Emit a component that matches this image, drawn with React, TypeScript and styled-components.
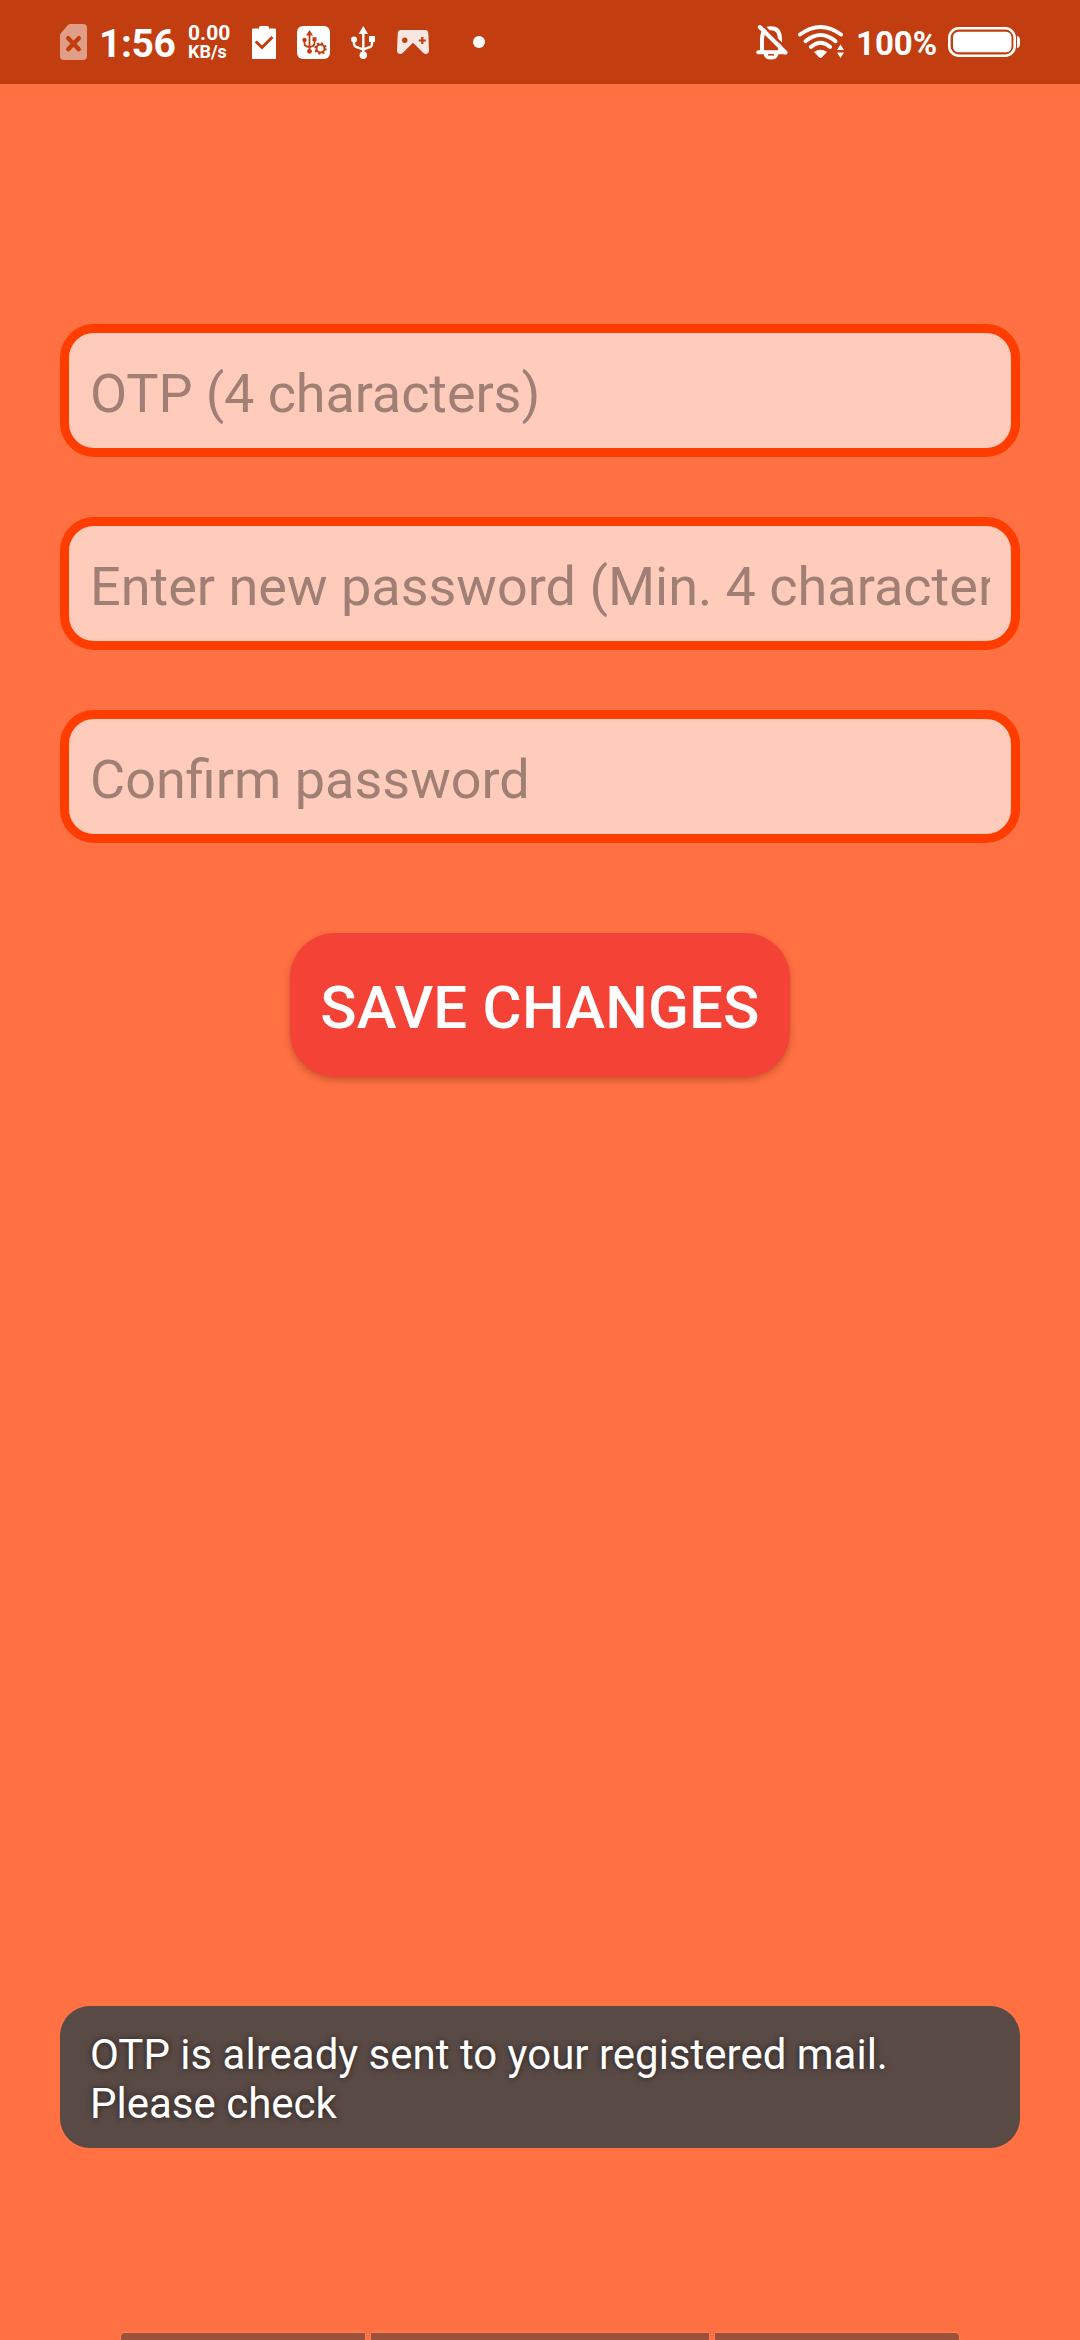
import React from "react";
import styled, { createGlobalStyle } from "styled-components";

const GlobalStyle = createGlobalStyle`
  *, *::before, *::after { box-sizing: border-box; }
  html, body { margin: 0; padding: 0; background: #ff7043; }
  body { font-family: Roboto, "Noto Sans", sans-serif; }
`;

const Screen = styled.div`
  display: flex;
  flex-direction: column;
  width: 1080px;
  height: 2340px;
  overflow: hidden;
  background: #ff7043;
`;

const StatusBar = styled.header`
  display: flex;
  justify-content: space-between;
  flex: none;
  height: 84px;
  padding: 0 60px;
  background: #c23d10;
  color: #fff;
`;

const StatusGroup = styled.div`
  display: flex;
  align-items: center;
  height: 84px;
`;

const Icon = styled.svg<{ $gap?: number }>`
  display: block;
  flex: none;
  margin-left: ${(p) => p.$gap ?? 0}px;
`;

const Clock = styled.span`
  width: 76px;
  margin-left: 12px;
  padding-top: 3px;
  font-size: 39px;
  font-weight: 700;
  line-height: 46px;
  letter-spacing: -0.4px;
  white-space: nowrap;
`;

const NetSpeed = styled.div`
  display: flex;
  flex-direction: column;
  width: 42px;
  margin-left: 13px;
  font-weight: 700;
  white-space: nowrap;
`;

const SpeedValue = styled.span`
  font-size: 21px;
  line-height: 19px;
`;

const SpeedUnit = styled.span`
  font-size: 18px;
  line-height: 17px;
`;

const BatteryText = styled.span`
  width: 81px;
  margin-left: 10px;
  padding-top: 4px;
  font-size: 33px;
  font-weight: 700;
  line-height: 38px;
  white-space: nowrap;
`;

const Form = styled.form`
  display: flex;
  flex-direction: column;
  align-items: center;
  flex: 1;
  padding: 240px 60px 0;
`;

const Field = styled.input<{ $tracking?: string }>`
  display: block;
  width: 100%;
  height: 133px;
  margin: 0 0 60px;
  padding: 6px 21px 0;
  border: 9px solid #ff3d00;
  border-radius: 34px;
  outline: 0;
  background: #ffccbc;
  color: #3b2a25;
  font: 400 54px/64px Roboto, "Noto Sans", sans-serif;
  letter-spacing: ${(p) => p.$tracking ?? "normal"};

  &::placeholder {
    color: #a07f75;
    opacity: 1;
  }
`;

const SaveButton = styled.button`
  width: 500px;
  height: 144px;
  margin-top: 30px;
  padding: 6px 0 0;
  border: 0;
  border-radius: 45px;
  background: #f44336;
  color: #fff;
  font: 500 60px/70px Roboto, "Noto Sans", sans-serif;
  letter-spacing: 0.2px;
  white-space: nowrap;
  box-shadow: 0 3px 6px rgba(90, 30, 0, 0.32);
`;

const Toast = styled.div`
  flex: none;
  height: 142px;
  margin: 0 60px 185px;
  padding: 24px 30px;
  border-radius: 30px;
  background: #5a4a45;
  color: #fff;
  font-size: 42px;
  line-height: 49px;
  text-shadow: 0 0 6px rgba(0, 0, 0, 0.6);
`;

const NavHint = styled.div`
  display: grid;
  grid-template-columns: 244px 338px 244px;
  gap: 6px;
  flex: none;
  height: 7px;
  padding: 0 121px;
`;

const NavSegment = styled.span<{ $radius?: string }>`
  background: #9c513b;
  border-radius: ${(p) => p.$radius ?? "0"};
  box-shadow: 0 0 2px #ffa27f;
`;

const BAR = "#c23d10";

const SimIcon = () => (
  <Icon width="27" height="36" viewBox="0 0 27 36">
    <path d="M10 0H23Q27 0 27 4V32Q27 36 23 36H4Q0 36 0 32V11.5Q0 10 1 9L8 1Q9 0 10 0Z" fill="#e19e87" />
    <path d="M8.2 14.2L18.8 25.2M18.8 14.2L8.2 25.2" stroke={BAR} strokeWidth="4.4" strokeLinecap="round" />
  </Icon>
);

const ClipboardIcon = () => (
  <Icon $gap={22} width="24" height="33" viewBox="0 0 24 33">
    <path d="M1 2.5H7V1.5Q7 0 8.5 0H15.5Q17 0 17 1.5V2.5H23Q24 2.5 24 3.5V32Q24 33 23 33H1Q0 33 0 32V3.5Q0 2.5 1 2.5Z" fill="#fff" />
    <path d="M3.800 15.500L10 21.500L20.500 11" fill="none" stroke={BAR} strokeWidth="3" />
  </Icon>
);

const UsbSettingsIcon = () => (
  <Icon $gap={21} width="33" height="33" viewBox="0 0 33 33">
    <rect width="33" height="33" rx="6" fill="#fff" />
    <g stroke={BAR} strokeWidth="1.8" fill="none">
      <path d="M12.5 7V25" />
      <path d="M7.5 15V17.5Q7.5 20 10 20.5L12.5 21Q17.5 20.5 17.5 17V13" />
    </g>
    <g fill={BAR}>
      <path d="M12.5 4L16 9.5H9Z" />
      <circle cx="7.5" cy="14" r="2.2" />
      <rect x="15.5" y="11.2" width="4" height="4" />
      <circle cx="12.5" cy="25.3" r="2.4" />
    </g>
    <circle cx="23.5" cy="22.5" r="5.6" fill="#fff" />
    <circle cx="23.5" cy="22.5" r="4" fill="none" stroke={BAR} strokeWidth="2" />
    <circle cx="23.5" cy="22.5" r="5.3" fill="none" stroke={BAR} strokeWidth="2" strokeDasharray="2 2.163" />
  </Icon>
);

const UsbIcon = () => (
  <Icon $gap={21} width="24" height="33" viewBox="0 0 24 33">
    <g stroke="#fff" strokeWidth="2.4" fill="none">
      <path d="M12.3 6V28" />
      <path d="M3 13V18Q3 20 5 21L12.3 23.5L19.5 21Q21 20 21 18V13" />
    </g>
    <g fill="#fff">
      <path d="M12.3 0L17 8H7.6Z" />
      <circle cx="3" cy="13.5" r="3" />
      <rect x="18" y="10" width="6" height="6" />
      <circle cx="12.3" cy="29.3" r="3.7" />
    </g>
  </Icon>
);

const GamepadIcon = () => (
  <Icon $gap={22} width="32" height="24" viewBox="0 0 32 24">
    <path
      d="M4 0H28Q31 0 31.3 3L32 20Q32 24 28.5 24Q27 24 25.8 22.6L16 12.8L6.2 22.6Q5 24 3.5 24Q0 24 0 20L.8 3Q1 0 4 0Z"
      fill="#f8e7e1"
    />
    <circle cx="7.8" cy="10.3" r="2.7" fill={BAR} />
    <path d="M25.3 7V14M21.8 10.5H28.8" stroke={BAR} strokeWidth="2.2" />
  </Icon>
);

const MoreDot = () => (
  <Icon $gap={44} width="12" height="12" viewBox="0 0 12 12">
    <circle cx="6" cy="6" r="6" fill="#fff" />
  </Icon>
);

const MutedBellIcon = () => (
  <Icon width="32" height="36" viewBox="0 0 32 36">
    <path
      d="M2.200 28.300H28.800M6 28V15.500Q6 4.300 15 4.300Q24 4.300 24 15.500V28"
      fill="none"
      stroke="#fff"
      strokeWidth="4"
      strokeLinecap="round"
    />
    <path d="M7.500 30H22.500Q21.500 35.600 15 35.600Q8.500 35.600 7.500 30Z" fill="#fff" />
    <path d="M12 30.800H18" stroke={BAR} strokeWidth="1.500" />
    <path d="M6.200 .5L32 26.300" stroke={BAR} strokeWidth="2.400" />
    <path d="M3.800 3L29.500 28.500" stroke="#fff" strokeWidth="4" strokeLinecap="round" />
  </Icon>
);

const WifiIcon = () => (
  <Icon $gap={10} width="48" height="34" viewBox="0 0 48 34">
    <g fill="none" stroke="#fff" strokeWidth="3.9" strokeLinecap="round">
      <path d="M2 9.500Q22.500 -5.500 43 9.500" />
      <path d="M7.500 16.200Q22.500 4 37.500 16.200" />
      <path d="M12.800 22Q22.500 13.500 32.200 22" />
    </g>
    <path d="M16 27Q22.500 22.500 29 27L23.500 32.700Q22.500 33.500 21.500 32.700Z" fill="#fff" />
    <path d="M42.500 19.500L46 25H39ZM39 27.500H46L42.500 33Z" fill="#fff" />
  </Icon>
);

const BatteryIcon = () => (
  <Icon $gap={11} width="72" height="30" viewBox="0 0 72 30">
    <rect x="1.300" y="1.300" width="65.400" height="27.400" rx="9.500" fill="none" stroke="#fff" strokeWidth="2.600" />
    <rect x="5" y="4.700" width="58.500" height="20.600" rx="5.500" fill="#fff" />
    <path d="M69 8.700Q72 10 72 12.500V17.500Q72 20 69 21.300Z" fill="#fff" />
  </Icon>
);

const fields = [
  { name: "otp", hint: "OTP (4 characters)", tracking: "-0.1px" },
  { name: "new", hint: "Enter new password (Min. 4 characters)" },
  { name: "confirm", hint: "Confirm password" },
];

export default function App() {
  return (
    <>
      <GlobalStyle />
      <Screen>
        <StatusBar>
          <StatusGroup>
            <SimIcon />
            <Clock>1:56</Clock>
            <NetSpeed>
              <SpeedValue>0.00</SpeedValue>
              <SpeedUnit>KB/s</SpeedUnit>
            </NetSpeed>
            <ClipboardIcon />
            <UsbSettingsIcon />
            <UsbIcon />
            <GamepadIcon />
            <MoreDot />
          </StatusGroup>
          <StatusGroup>
            <MutedBellIcon />
            <WifiIcon />
            <BatteryText>100%</BatteryText>
            <BatteryIcon />
          </StatusGroup>
        </StatusBar>
        <Form>
          {fields.map((f) => (
            <Field key={f.name} name={f.name} placeholder={f.hint} $tracking={f.tracking} />
          ))}
          <SaveButton type="button">SAVE CHANGES</SaveButton>
        </Form>
        <Toast role="status">OTP is already sent to your registered mail. Please check</Toast>
        <NavHint>
          <NavSegment $radius="4px 0 0 0" />
          <NavSegment />
          <NavSegment $radius="0 4px 0 0" />
        </NavHint>
      </Screen>
    </>
  );
}
